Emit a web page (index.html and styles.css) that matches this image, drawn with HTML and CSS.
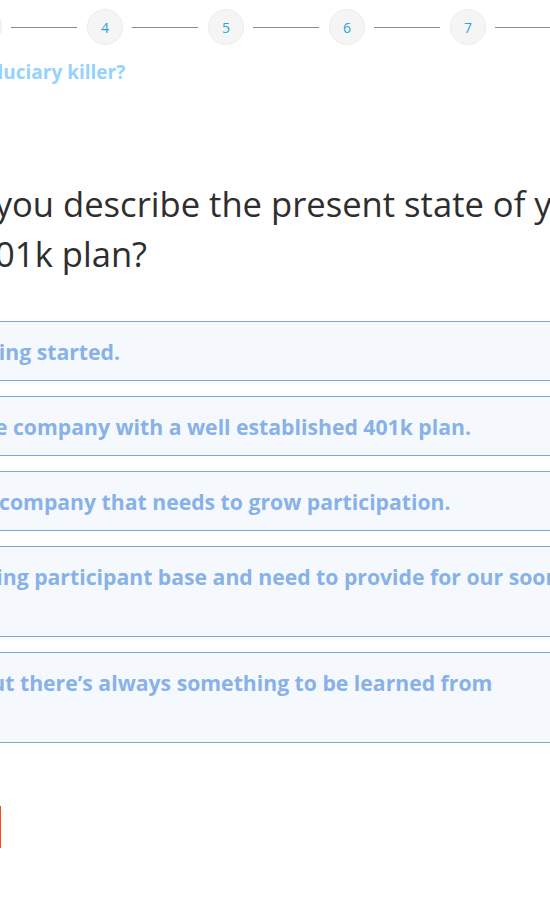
FILE: index.html
```html
<!DOCTYPE html>
<html lang="en">
<head>
<meta charset="utf-8">
<title>401k plan assessment</title>
<link rel="stylesheet" href="styles.css">
</head>
<body>
<div class="page">
  <ol class="steps">
    <li class="dot">1</li><li class="bar"></li>
    <li class="dot">2</li><li class="bar"></li>
    <li class="dot">3</li><li class="bar"></li>
    <li class="dot">4</li><li class="bar"></li>
    <li class="dot">5</li><li class="bar"></li>
    <li class="dot">6</li><li class="bar"></li>
    <li class="dot">7</li><li class="bar"></li>
    <li class="dot">8</li>
  </ol>
  <div class="content">
    <p class="topic">Fiduciary killer?</p>
    <h1 class="question">How would you describe the present state of your company's 401k plan?</h1>
    <ul class="options">
      <li class="option">We're just getting started.</li>
      <li class="option">We're a mature company with a well established 401k plan.</li>
      <li class="option">We're a young company that needs to grow participation.</li>
      <li class="option">We have an aging participant base and need to provide for our soon-to-be retirees.</li>
      <li class="option">We're great, but there’s always something to be learned from specialists.</li>
    </ul>
    <div class="actions"><button class="next" type="button">Next</button></div>
  </div>
</div>
</body>
</html>
```
FILE: styles.css
```css
html, body {
  margin: 0;
  padding: 0;
  background: #ffffff;
}
body {
  overflow: hidden;
  font-family: "Open Sans", "Noto Sans", sans-serif;
  color: #333333;
}
.page {
  width: 1200px;
  margin-left: -300px;
}
.steps {
  list-style: none;
  margin: 0;
  padding: 9px 0 0 24px;
  display: flex;
  align-items: center;
}
.dot {
  box-sizing: border-box;
  width: 36px;
  height: 36px;
  border: 1px solid #ececec;
  border-radius: 50%;
  background: #f5f5f5;
  color: #27a6dc;
  font-size: 14px;
  display: flex;
  align-items: center;
  justify-content: center;
  flex: none;
}
.bar {
  width: 66px;
  height: 1px;
  background: #8a8a8a;
  margin: 0 10px 0 9px;
  flex: none;
}
.content {
  margin-left: 97px;
  width: 900px;
}
.topic {
  margin: 15px 0 0 178px;
  font-size: 19px;
  line-height: 24px;
  font-weight: 700;
  color: #95d3fa;
}
.question {
  margin: 95px 0 0 -3px;
  width: 900px;
  text-indent: 11px;
  font-size: 34.6px;
  line-height: 50px;
  font-weight: 400;
  color: #2e2e2e;
}
.options {
  list-style: none;
  margin: 42px 0 0 26px;
  padding: 0;
  width: 783px;
}
.option {
  border: 1px solid #76a9e2;
  background: #f5f9fd;
  padding: 14px 20px 13px;
  line-height: 31px;
  font-size: 21.2px;
  font-weight: 700;
  color: #88b2e7;
  margin-bottom: 15px;
}
.actions {
  margin: 63px 0 0 23px;
}
.next {
  width: 181px;
  height: 42px;
  border: 0;
  background: #ff4a12;
  color: #ffffff;
  font: 700 16px "Open Sans", sans-serif;
}
```
